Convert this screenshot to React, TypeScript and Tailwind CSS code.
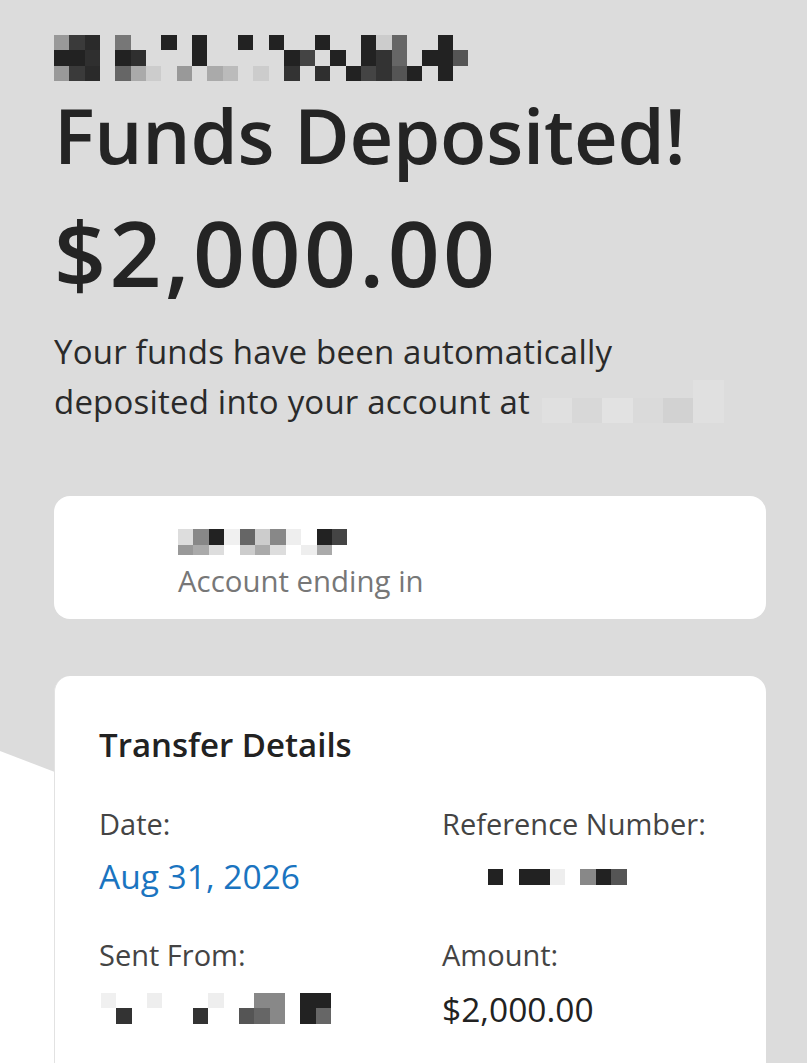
import React from "react";

type Cell = string | null;

function Pix({ rows, w, hs }: { rows: Cell[][]; w: number; hs: number[] }) {
  return (
    <div className="flex flex-col">
      {rows.map((r, i) => (
        <div key={i} className="flex">
          {r.map((c, j) => (
            <div
              key={j}
              style={{ width: w, height: hs[i], background: c ?? "transparent" }}
            />
          ))}
        </div>
      ))}
    </div>
  );
}

const _ = null;
const titleRows: Cell[][] = [
  ["#999", "#3a3a3a", "#2a2a2a", _, "#777", _, _, "#222", _, "#222", _, _, "#222", _, "#222", _, _, "#222", _, _, "#222", "#ccc", "#666", _, _, "#222", _],
  ["#222", "#222", "#2f2f2f", _, "#222", "#2f2f2f", _, _, _, "#222", _, _, _, _, _, "#222", "#444", _, "#222", _, "#222", "#333", "#666", _, "#222", "#222", "#555"],
  ["#999", "#3a3a3a", "#2a2a2a", _, "#666", "#aaa", "#ccc", _, "#999", _, "#aaa", "#bbb", _, "#ccc", _, "#333", _, "#2f2f2f", _, "#222", "#444", "#333", "#555", "#222", _, "#222", _],
];

const acctRows: Cell[][] = [
  ["#ddd", "#888", "#222", "#f0f0f0", "#666", "#ccc", "#888", "#eee", _, "#222", "#444"],
  ["#999", "#aaa", "#ddd", _, "#ccc", "#aaa", "#ddd", _, "#eee", "#aaa", _],
];

const refRows: Cell[][] = [
  ["#222", _, "#222", "#222", "#eee", _, "#888", "#222", "#555"],
];

const sentRows: Cell[][] = [
  ["#f0f0f0", _, _, "#eee", _, _, _, "#eee", _, _, "#888", "#888", _, "#222", "#222"],
  [_, "#333", _, _, _, _, "#333", _, _, "#555", "#666", "#888", _, "#222", "#666"],
];

const bankRows: Cell[][] = [
  [_, _, _, _, _, "#e0e0e0"],
  ["#e0e0e0", "#d8d8d8", "#e2e2e2", "#dadada", "#d2d2d2", "#e0e0e0"],
];

export default function App() {
  return (
    <div className="relative min-h-[1063px] w-full overflow-hidden bg-[#dcdcdc] font-['Open_Sans',sans-serif] text-[#242424]">
      <svg
        className="absolute left-0 top-0"
        width="807"
        height="1063"
        viewBox="0 0 807 1063"
      >
        <polygon points="0,751 60,774 60,1063 0,1063" fill="#ffffff" />
      </svg>
      <div className="relative pl-[54px] pr-[41px] pt-[35px]">
        <Pix rows={titleRows} w={15.35} hs={[15.3, 15.3, 15.3]} />
        <h1 className="mt-[16px] text-[76px] font-semibold leading-[76px] tracking-[-0.2px]">
          Funds Deposited!
        </h1>
        <div className="mt-[34px] text-[91px] font-semibold leading-[91px] tracking-[3.4px]">
          $2,000.00
        </div>
        <p className="mt-[29px] text-[33px] leading-[50px] tracking-[0.2px] text-[#2a2a2a]">
          Your funds have been automatically
          <br />
          deposited into your account at{" "}
          <span className="relative inline-block h-[1px] w-[182px]">
            <span className="absolute left-[3px] top-[-33px]">
              <Pix rows={bankRows} w={30.3} hs={[18, 25]} />
            </span>
          </span>
        </p>

        <div className="mt-[69px] h-[123px] rounded-[16px] bg-white pl-[124px] pt-[33px]">
          <Pix rows={acctRows} w={15.4} hs={[16, 10]} />
          <div className="mt-[8px] text-[29.4px] leading-[36px] text-[#777]">
            Account ending in
          </div>
        </div>

        <div className="mt-[57px] h-[420px] rounded-[16px] border-l border-[#e2e2e2] bg-white pl-[44px] pt-[49px]">
          <div className="text-[33px] font-semibold leading-[40px] text-[#222]">
            Transfer Details
          </div>
          <div className="mt-[41px] grid grid-cols-[343px_1fr]">
            <div>
              <div className="text-[29px] leading-[36px] text-[#444]">Date:</div>
              <div className="mt-[14px] text-[33.5px] leading-[40px] text-[#1a74c0]">
                Aug 31, 2026
              </div>
            </div>
            <div>
              <div className="text-[29px] leading-[36px] text-[#444]">
                Reference Number:
              </div>
              <div className="mt-[27px] pl-[46px]">
                <Pix rows={refRows} w={15.4} hs={[16]} />
              </div>
            </div>
            <div className="mt-[41px]">
              <div className="text-[29px] leading-[36px] text-[#444]">
                Sent From:
              </div>
              <div className="mt-[20px] pl-[2px]">
                <Pix rows={sentRows} w={15.35} hs={[15.5, 15.5]} />
              </div>
            </div>
            <div className="mt-[41px]">
              <div className="text-[29px] leading-[36px] text-[#444]">Amount:</div>
              <div className="mt-[16px] text-[33.5px] leading-[40px] text-[#222]">
                $2,000.00
              </div>
            </div>
          </div>
        </div>
      </div>
    </div>
  );
}
